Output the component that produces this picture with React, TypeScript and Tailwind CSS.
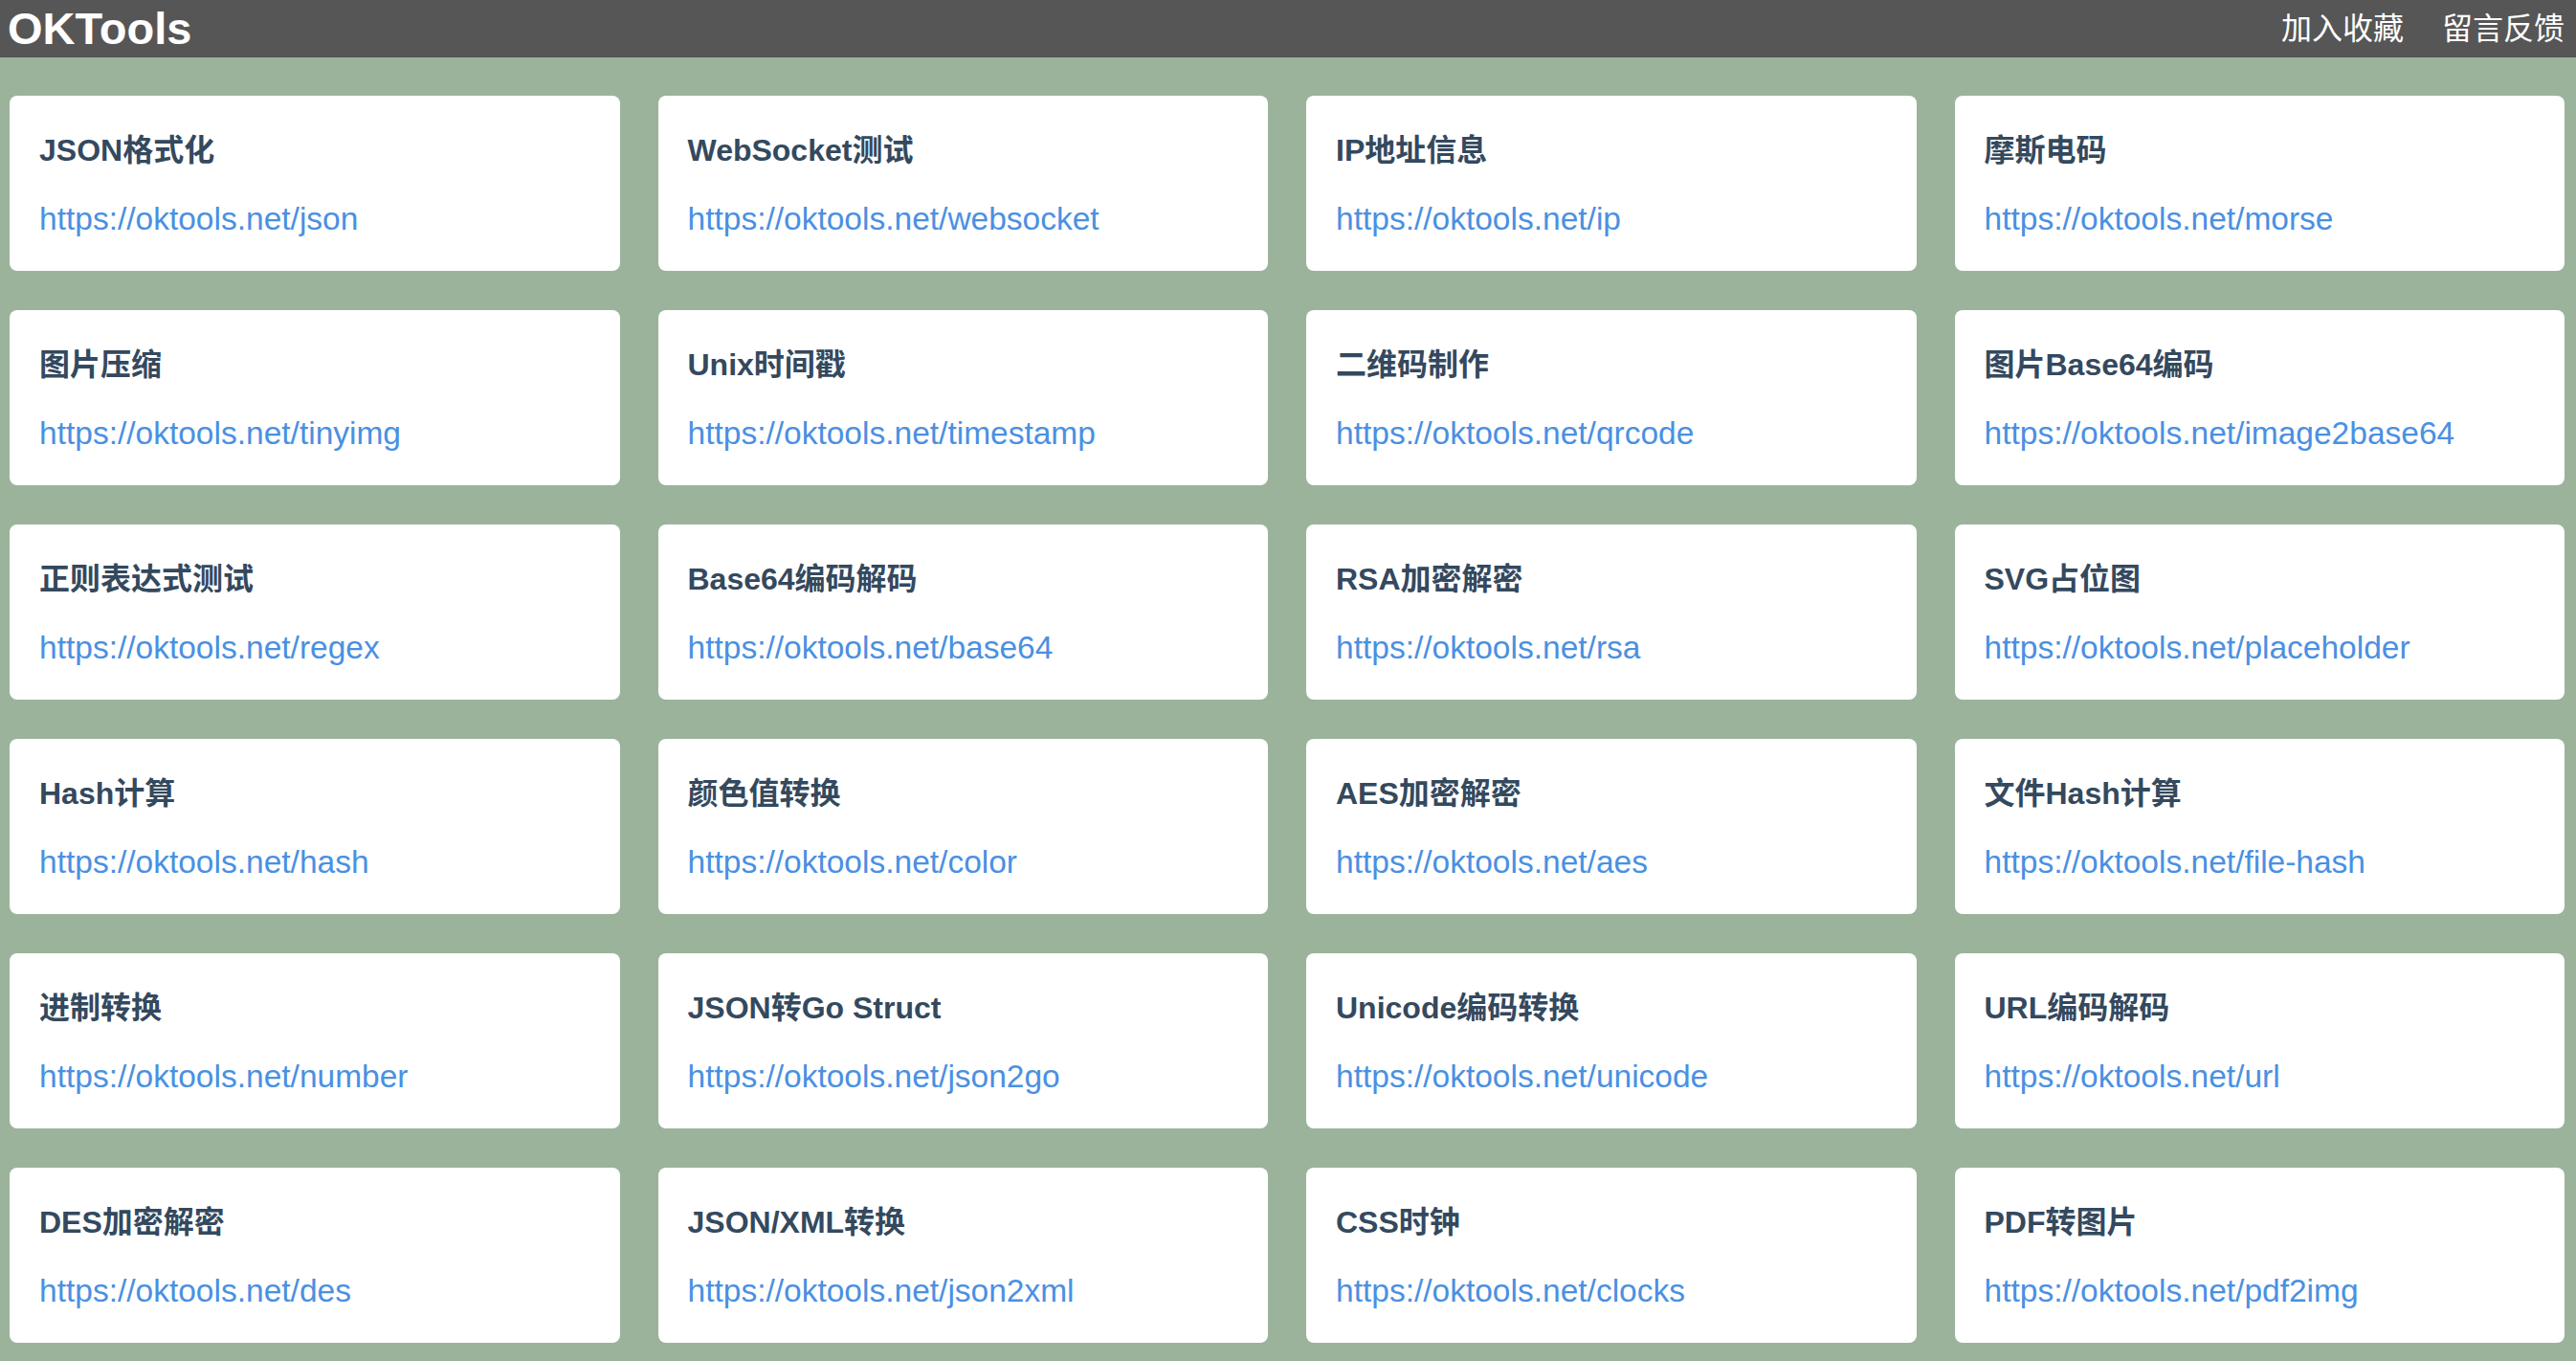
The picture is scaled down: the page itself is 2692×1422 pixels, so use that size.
const tools = [
  ["JSON格式化", "json"],
  ["WebSocket测试", "websocket"],
  ["IP地址信息", "ip"],
  ["摩斯电码", "morse"],
  ["图片压缩", "tinyimg"],
  ["Unix时间戳", "timestamp"],
  ["二维码制作", "qrcode"],
  ["图片Base64编码", "image2base64"],
  ["正则表达式测试", "regex"],
  ["Base64编码解码", "base64"],
  ["RSA加密解密", "rsa"],
  ["SVG占位图", "placeholder"],
  ["Hash计算", "hash"],
  ["颜色值转换", "color"],
  ["AES加密解密", "aes"],
  ["文件Hash计算", "file-hash"],
  ["进制转换", "number"],
  ["JSON转Go Struct", "json2go"],
  ["Unicode编码转换", "unicode"],
  ["URL编码解码", "url"],
  ["DES加密解密", "des"],
  ["JSON/XML转换", "json2xml"],
  ["CSS时钟", "clocks"],
  ["PDF转图片", "pdf2img"],
]

function ToolCard({ name, path }: { name: string; path: string }) {
  const url = "https://oktools.net/" + path
  return (
    <a href={url} className="block h-[183px] rounded-lg bg-white pt-[33px] pb-[30px] px-[31px]">
      <h2 className="text-[32px] leading-[48px] font-bold text-[#34495e] whitespace-nowrap">{name}</h2>
      <p className="mt-[24px] text-[33.5px] leading-[48px] text-[#4a90e2] whitespace-nowrap">{url}</p>
    </a>
  )
}

export default function App() {
  return (
    <div className="min-h-screen bg-[#9bb39b] font-['Liberation_Sans','Noto_Sans_CJK_SC',sans-serif]">
      <header className="flex h-[60px] items-center justify-between bg-[#565656] pl-[8px] pr-[12px] text-white">
        <h1 className="text-[47px] leading-[60px] font-bold">OKTools</h1>
        <nav className="flex gap-[40px] text-[32px] leading-[60px]">
          <a href="#">加入收藏</a>
          <a href="#">留言反馈</a>
        </nav>
      </header>
      <main className="grid grid-cols-4 gap-x-[40px] gap-y-[41px] pt-[40px] pb-[19px] pl-[10px] pr-[12px]">
        {tools.map(([name, path]) => (
          <ToolCard key={path} name={name} path={path} />
        ))}
      </main>
    </div>
  )
}
